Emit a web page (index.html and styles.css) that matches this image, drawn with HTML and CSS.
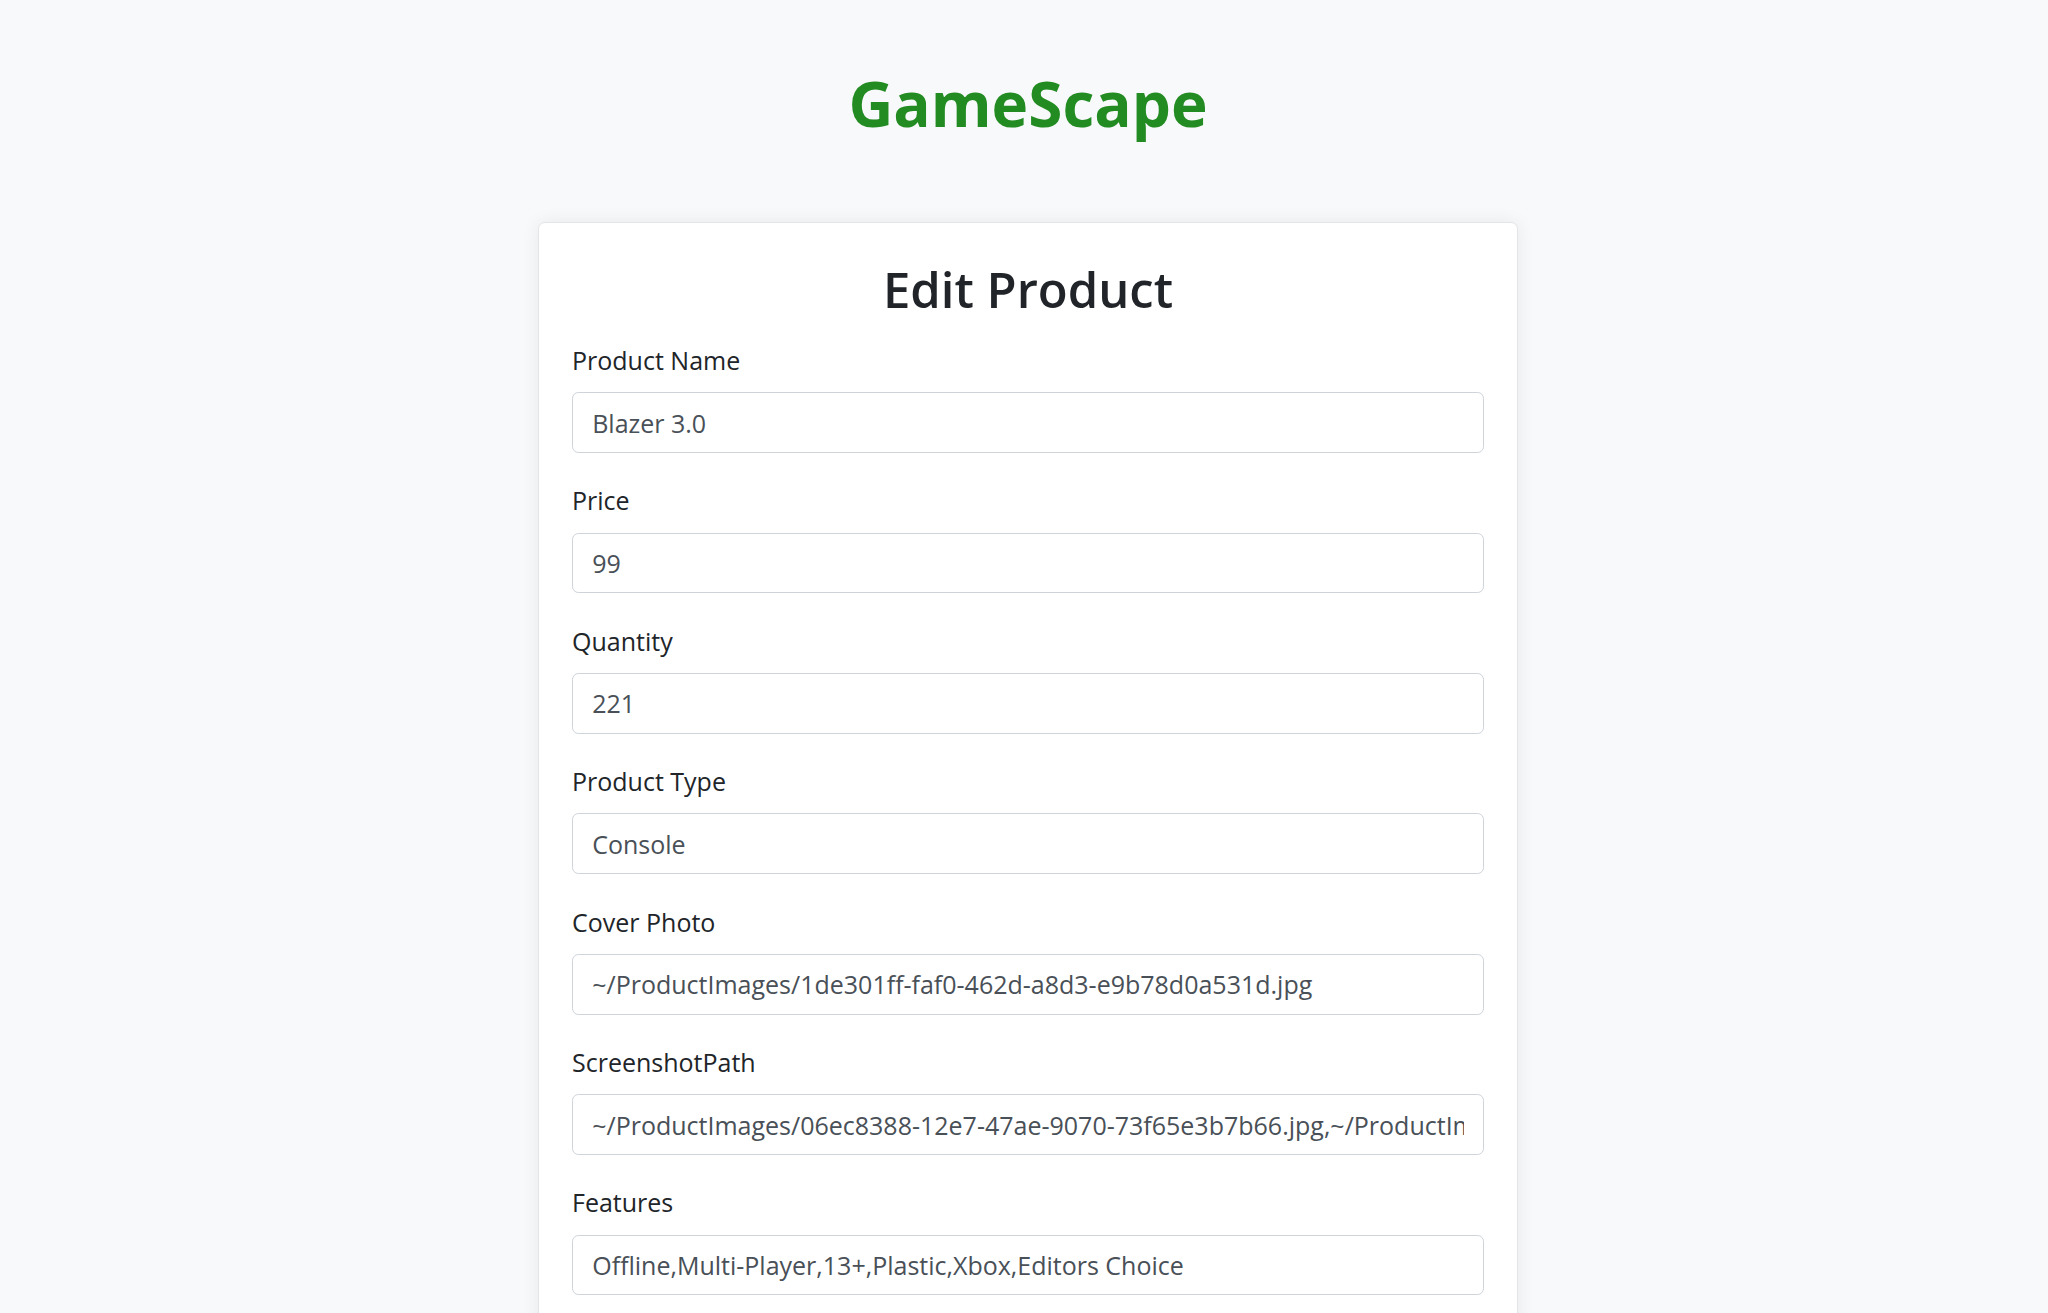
FILE: index.html
```html
<!DOCTYPE html>
<html lang="en">
<head>
<meta charset="utf-8">
<title>GameScape - Edit Product</title>
<link rel="stylesheet" href="styles.css">
</head>
<body>
<div class="page">
  <h1 class="brand">GameScape</h1>
  <div class="card">
    <div class="card-body">
      <h2 class="card-title">Edit Product</h2>
      <form class="form">
        <div class="form-group">
          <label class="form-label">Product Name</label>
          <input class="form-control" type="text" value="Blazer 3.0">
        </div>
        <div class="form-group">
          <label class="form-label">Price</label>
          <input class="form-control" type="text" value="99">
        </div>
        <div class="form-group">
          <label class="form-label">Quantity</label>
          <input class="form-control" type="text" value="221">
        </div>
        <div class="form-group">
          <label class="form-label">Product Type</label>
          <input class="form-control" type="text" value="Console">
        </div>
        <div class="form-group">
          <label class="form-label">Cover Photo</label>
          <input class="form-control" type="text" value="~/ProductImages/1de301ff-faf0-462d-a8d3-e9b78d0a531d.jpg">
        </div>
        <div class="form-group">
          <label class="form-label">ScreenshotPath</label>
          <input class="form-control" type="text" value="~/ProductImages/06ec8388-12e7-47ae-9070-73f65e3b7b66.jpg,~/ProductImages/2b1f5c1e-7f3a-4d2b-9c1e-0a8b7d6e5f4c.jpg">
        </div>
        <div class="form-group">
          <label class="form-label">Features</label>
          <input class="form-control" type="text" value="Offline,Multi-Player,13+,Plastic,Xbox,Editors Choice">
        </div>
      </form>
    </div>
  </div>
</div>
</body>
</html>
```

FILE: styles.css
```css
html, body {
  margin: 0;
  padding: 0;
}

body {
  background: #f8f9fa;
  color: #212529;
  font-family: "Open Sans", "Noto Sans", sans-serif;
}

.page {
  display: flex;
  flex-direction: column;
  align-items: center;
  padding: 65px 0 0 8px;
}

.brand {
  margin: 0;
  font-size: 62px;
  line-height: 77px;
  font-weight: 700;
  color: #228b22;
}

.card {
  margin-top: 80px;
  width: 980px;
  box-sizing: border-box;
  background: #fff;
  border: 1px solid #e3e5e8;
  border-radius: 7px;
  box-shadow: 0 0 18px rgba(0, 0, 0, 0.07);
}

.card-body {
  padding: 36px 33px 40px;
}

.card-title {
  margin: 0 0 21px;
  text-align: center;
  font-size: 49px;
  line-height: 61px;
  font-weight: 600;
  color: #212529;
}

.form {
  display: flex;
  flex-direction: column;
  gap: 28.4px;
}

.form-group {
  display: flex;
  flex-direction: column;
}

.form-label {
  font-size: 25px;
  line-height: 38.4px;
  margin-bottom: 12.8px;
  color: #212529;
}

.form-control {
  box-sizing: border-box;
  width: 100%;
  height: 60.8px;
  padding: 9.6px 19.2px;
  font-family: inherit;
  font-size: 25px;
  line-height: 38.4px;
  color: #495057;
  background: #fff;
  border: 1px solid #ced4da;
  border-radius: 6.4px;
  outline: none;
}
```
